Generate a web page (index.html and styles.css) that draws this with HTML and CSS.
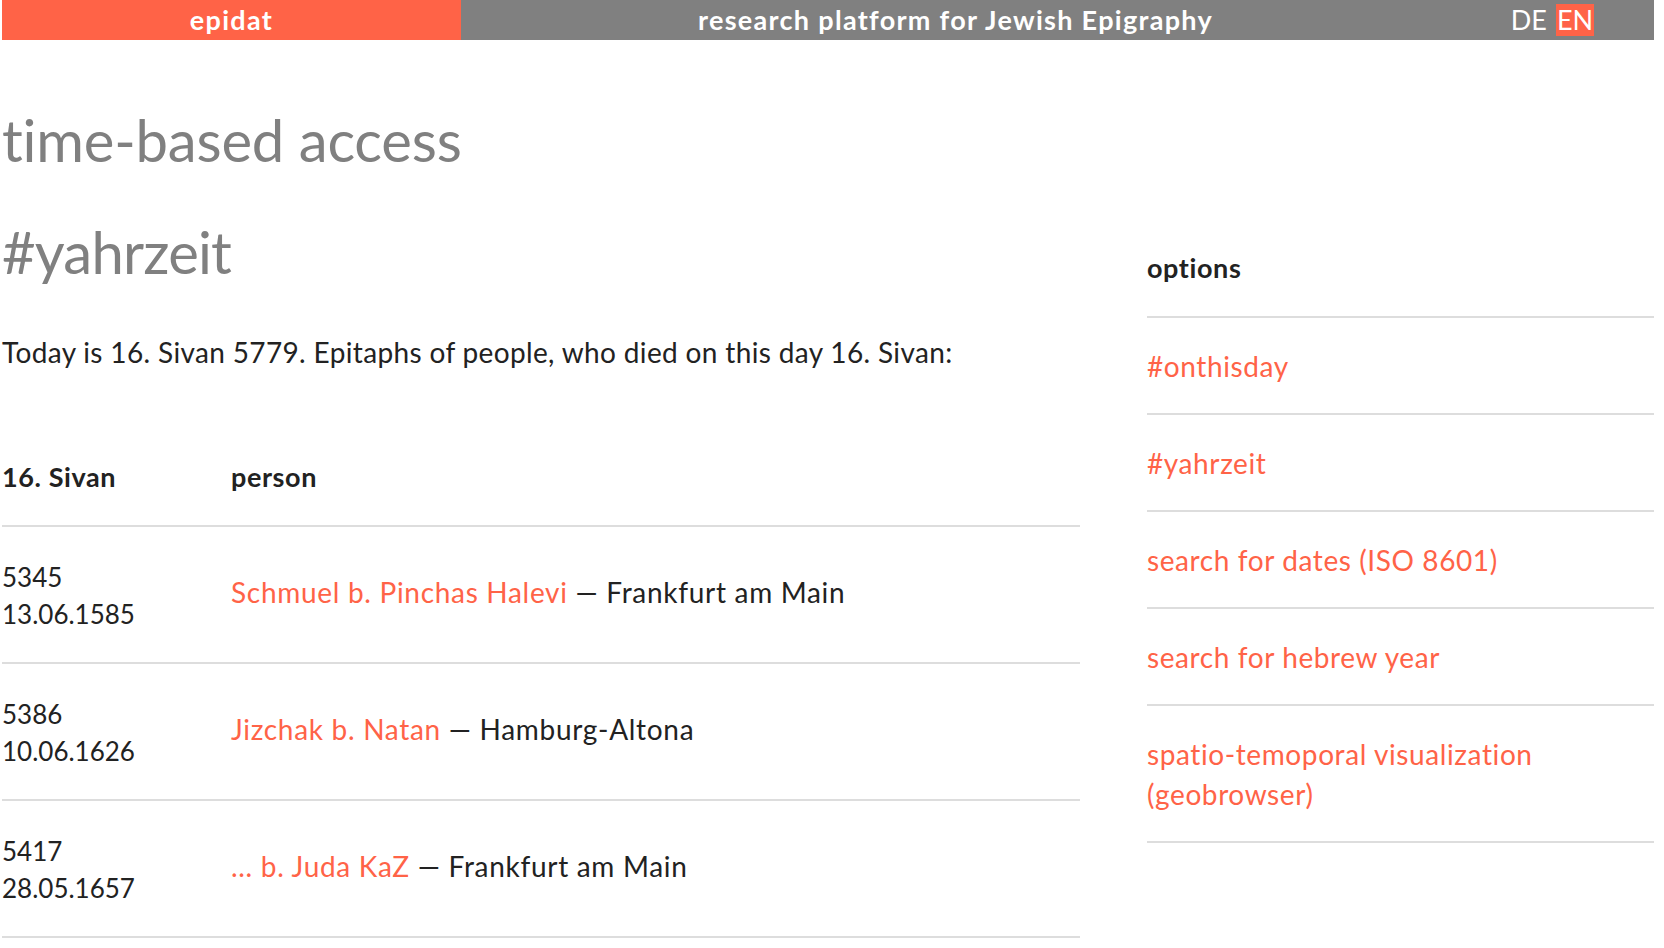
FILE: index.html
```html
<!DOCTYPE html>
<html lang="en">
<head>
<meta charset="utf-8">
<title>epidat – time-based access</title>
<link rel="stylesheet" href="styles.css">
</head>
<body>
<header class="topbar">
  <div class="brand">epidat</div>
  <div class="tagline">research platform for Jewish Epigraphy</div>
  <div class="langs"><span class="lang">DE</span><span class="lang lang-active">EN</span></div>
</header>
<main class="page">
  <h1 class="page-title">time-based access</h1>
  <div class="layout">
    <section class="main-col">
      <h2 class="section-title">#yahrzeit</h2>
      <p class="intro">Today is 16. Sivan 5779. Epitaphs of people, who died on this day 16. Sivan:</p>
      <table class="results">
        <thead>
          <tr><th class="col-date">16. Sivan</th><th>person</th></tr>
        </thead>
        <tbody>
          <tr>
            <td class="col-date">5345<br>13.06.1585</td>
            <td class="person"><a href="#">Schmuel b. Pinchas Halevi</a> — Frankfurt am Main</td>
          </tr>
          <tr>
            <td class="col-date">5386<br>10.06.1626</td>
            <td class="person"><a href="#">Jizchak b. Natan</a> — Hamburg-Altona</td>
          </tr>
          <tr>
            <td class="col-date">5417<br>28.05.1657</td>
            <td class="person"><a href="#">... b. Juda KaZ</a> — Frankfurt am Main</td>
          </tr>
        </tbody>
      </table>
    </section>
    <aside class="options">
      <h3 class="options-title">options</h3>
      <ul class="options-list">
        <li><a href="#">#onthisday</a></li>
        <li><a href="#">#yahrzeit</a></li>
        <li><a href="#">search for dates (ISO 8601)</a></li>
        <li><a href="#">search for hebrew year</a></li>
        <li><a href="#">spatio-temoporal visualization (geobrowser)</a></li>
      </ul>
    </aside>
  </div>
</main>
</body>
</html>
```
FILE: styles.css
```css
* { box-sizing: border-box; }

html, body {
  margin: 0;
  padding: 0;
  background: #fff;
}

body {
  font-family: Lato, "Open Sans", sans-serif;
  color: #222;
  padding: 0 10px 0 2px;
}

a {
  color: #ff6347;
  text-decoration: none;
}

/* top bar */
.topbar {
  display: grid;
  grid-template-columns: 459px 989px 1fr;
  height: 40px;
  background: #808080;
  color: #fff;
  font-size: 26px;
  line-height: 40px;
}

.brand,
.tagline {
  text-align: center;
  font-weight: 700;
  font-size: 27px;
  letter-spacing: 1.3px;
}

.brand {
  background: #ff6347;
}

.langs {
  display: flex;
  justify-content: center;
  align-items: center;
  gap: 8px;
  font-size: 27px;
}

.lang {
  display: inline-block;
  line-height: 32px;
  padding: 0 1px;
}

.lang-active {
  background: #ff6347;
}

/* page */
.page-title,
.section-title {
  font-size: 58px;
  line-height: 64px;
  font-weight: 400;
  color: #808080;
  letter-spacing: -0.2px;
  margin: 0;
}

.page-title {
  margin-top: 68px;
}

.section-title {
  letter-spacing: -0.8px;
}

.layout {
  display: grid;
  grid-template-columns: 1078px 1fr;
  column-gap: 67px;
  margin-top: 48px;
}

.intro {
  font-size: 28px;
  letter-spacing: 0.35px;
  line-height: 40px;
  margin: 48px 0 85px;
}

.results {
  width: 100%;
  border-collapse: collapse;
  font-size: 26px;
}

.results th {
  text-align: left;
  font-weight: 700;
  font-size: 27px;
  letter-spacing: 0.6px;
  line-height: 40px;
  padding: 0 0 28px;
  border-bottom: 2px solid #ddd;
}

.results td {
  line-height: 37px;
  padding: 32px 0 29px;
  border-bottom: 2px solid #ddd;
  vertical-align: middle;
}

.results .col-date {
  width: 229px;
}

.results td.person {
  font-size: 28px;
  letter-spacing: 0.7px;
  padding: 30px 0 34px;
}

/* options */
.options-title {
  font-size: 27px;
  font-weight: 700;
  letter-spacing: 0.6px;
  line-height: 40px;
  margin: 28px 0 0;
  padding-bottom: 28px;
  border-bottom: 2px solid #ddd;
}

.options-list {
  list-style: none;
  margin: 0;
  padding: 0;
  font-size: 28px;
  letter-spacing: 0.6px;
  line-height: 40px;
}

.options-list li {
  padding: 27.5px 0;
  border-bottom: 2px solid #ddd;
}
```
